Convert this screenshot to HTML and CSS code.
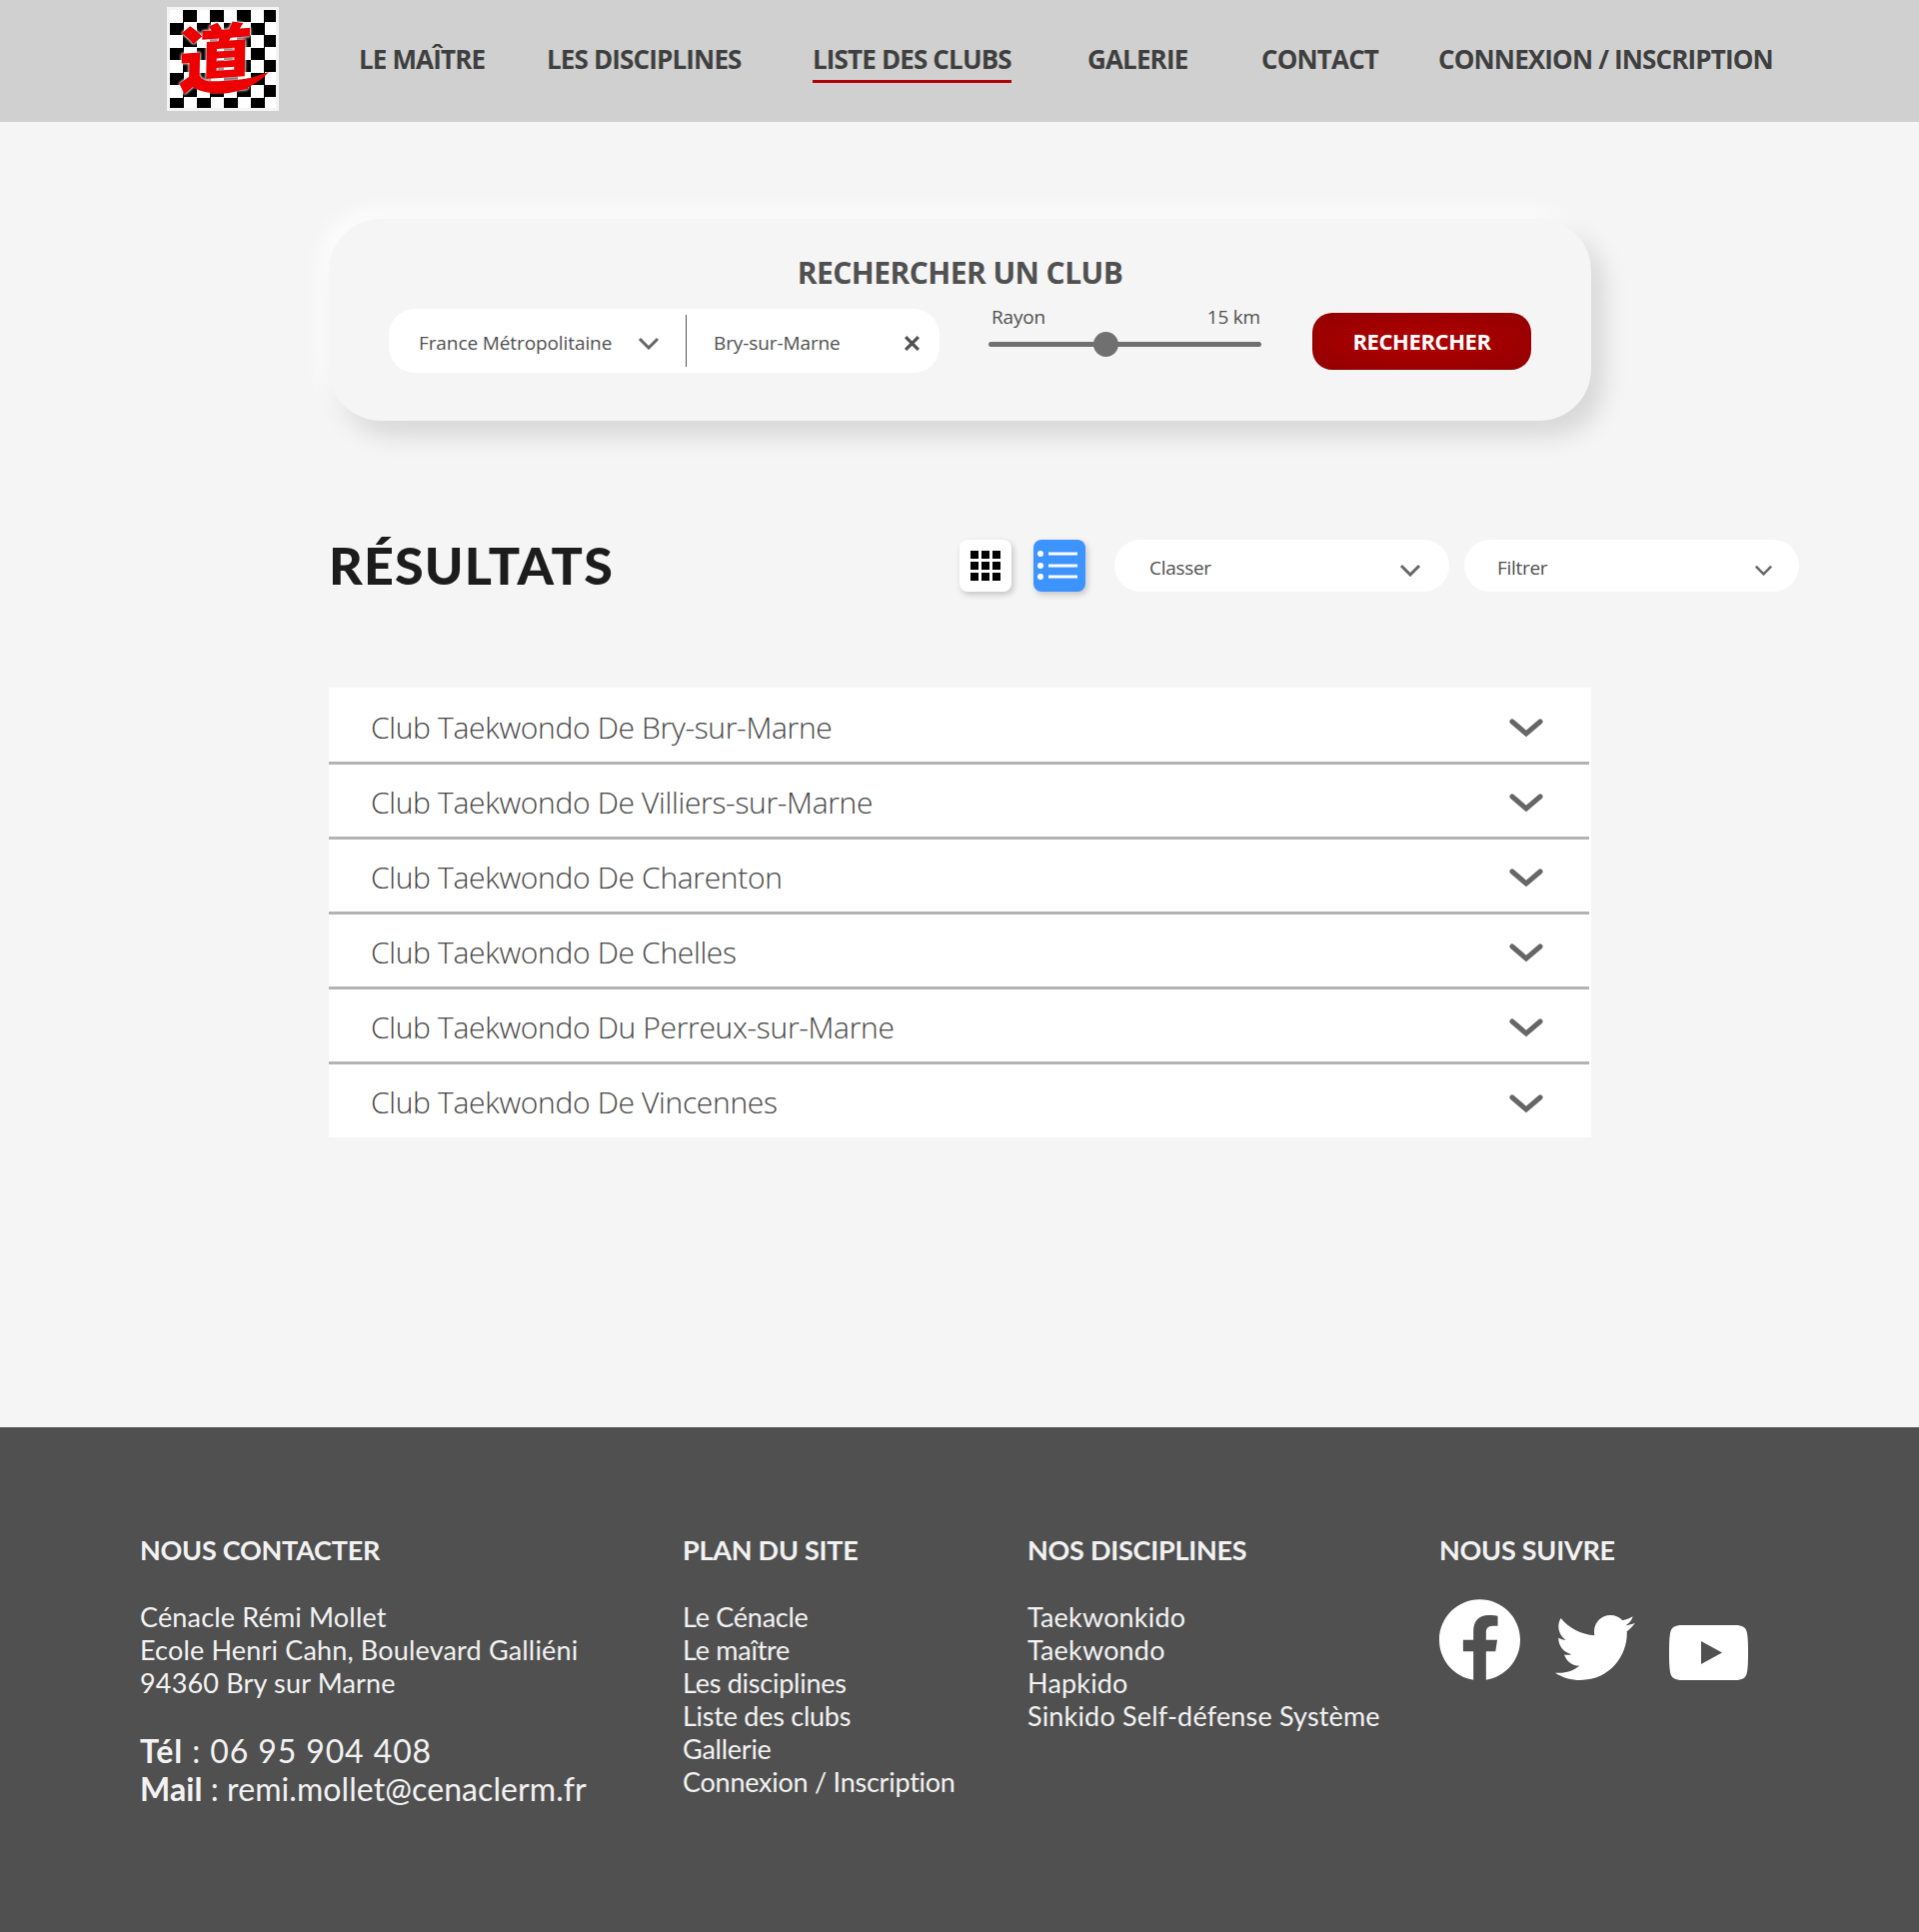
FILE: index.html
```html
<!DOCTYPE html>
<html lang="fr">
<head>
    <meta charset="UTF-8">
    <meta name="viewport" content="width=device-width, initial-scale=1.0">
    <title>Liste des clubs</title>
    <link rel="stylesheet" href="styles.css">
</head>
<body>
    <header class="top">
        <a class="logo" href="#">
            <span class="logo-sign">道</span>
            <svg class="logo-swoosh" viewBox="0 0 84 24"><path d="M0 10c14 8 30 8 46 4 14-4 26-8 38-12-10 11-24 19-40 21C28 25 8 22 0 10z"/></svg>
        </a>
        <nav class="menu">
            <a href="#">LE MAÎTRE</a>
            <a href="#">LES DISCIPLINES</a>
            <a href="#" class="active"><span>LISTE DES CLUBS</span></a>
            <a href="#">GALERIE</a>
            <a href="#">CONTACT</a>
            <a href="#">CONNEXION / INSCRIPTION</a>
        </nav>
    </header>

    <main class="content">
        <section class="search">
            <h2>RECHERCHER UN CLUB</h2>
            <div class="search-row">
                <div class="search-bar">
                    <div class="bar-zone">
                        <span>France Métropolitaine</span>
                        <svg class="chev-small" viewBox="0 0 22 13"><path d="M2 2l9 9 9-9"/></svg>
                    </div>
                    <div class="bar-place">
                        <span>Bry-sur-Marne</span>
                        <svg class="cross" viewBox="0 0 16 16"><path d="M2 2l12 12M14 2L2 14"/></svg>
                    </div>
                </div>
                <div class="radius">
                    <div class="radius-labels"><span>Rayon</span><span>15 km</span></div>
                    <div class="track"><i class="thumb"></i></div>
                </div>
                <button class="btn-search">RECHERCHER</button>
            </div>
        </section>

        <section class="results-head">
            <h1>RÉSULTATS</h1>
            <div class="tools">
                <button class="view-btn">
                    <svg viewBox="0 0 30 30">
                        <path d="M0 0h8v8H0zM11 0h8v8h-8zM22 0h8v8h-8zM0 11h8v8H0zM11 11h8v8h-8zM22 11h8v8h-8zM0 22h8v8H0zM11 22h8v8h-8zM22 22h8v8h-8z"/>
                    </svg>
                </button>
                <button class="view-btn on">
                    <svg viewBox="0 0 44 30">
                        <circle cx="3" cy="3" r="3"/><circle cx="3" cy="15" r="3"/><circle cx="3" cy="26" r="3"/>
                        <path d="M11 1.500h29v3H11zM11 13.500h29v3H11zM11 24.500h29v3H11z"/>
                    </svg>
                </button>
                <div class="pick pick-sort"><span>Classer</span><svg class="chev-small" viewBox="0 0 22 13"><path d="M2 2l9 9 9-9"/></svg></div>
                <div class="pick pick-filter"><span>Filtrer</span><svg class="chev-small" viewBox="0 0 22 13"><path d="M2 2l9 9 9-9"/></svg></div>
            </div>
        </section>

        <ul class="clubs">
            <li><span>Club Taekwondo De Bry-sur-Marne</span><svg class="chev" viewBox="0 0 34 19"><path d="M3 3l14 12L31 3"/></svg></li>
            <li><span>Club Taekwondo De Villiers-sur-Marne</span><svg class="chev" viewBox="0 0 34 19"><path d="M3 3l14 12L31 3"/></svg></li>
            <li><span>Club Taekwondo De Charenton</span><svg class="chev" viewBox="0 0 34 19"><path d="M3 3l14 12L31 3"/></svg></li>
            <li><span>Club Taekwondo De Chelles</span><svg class="chev" viewBox="0 0 34 19"><path d="M3 3l14 12L31 3"/></svg></li>
            <li><span>Club Taekwondo Du Perreux-sur-Marne</span><svg class="chev" viewBox="0 0 34 19"><path d="M3 3l14 12L31 3"/></svg></li>
            <li><span>Club Taekwondo De Vincennes</span><svg class="chev" viewBox="0 0 34 19"><path d="M3 3l14 12L31 3"/></svg></li>
        </ul>
    </main>

    <footer class="foot">
        <div class="foot-col">
            <h3>NOUS CONTACTER</h3>
            <p>Cénacle Rémi Mollet<br>Ecole Henri Cahn, Boulevard Galliéni<br>94360 Bry sur Marne</p>
            <p class="foot-big"><span class="foot-tel"><b>Tél</b> : 06 95 904 408</span><br><b>Mail</b> : remi.mollet@cenaclerm.fr</p>
        </div>
        <div class="foot-col foot-plan">
            <h3>PLAN DU SITE</h3>
            <p>Le Cénacle<br>Le maître<br>Les disciplines<br>Liste des clubs<br>Gallerie<br>Connexion / Inscription</p>
        </div>
        <div class="foot-col">
            <h3>NOS DISCIPLINES</h3>
            <p>Taekwonkido<br>Taekwondo<br>Hapkido<br>Sinkido Self-défense Système</p>
        </div>
        <div class="foot-col">
            <h3>NOUS SUIVRE</h3>
            <div class="social">
                <svg class="fb" viewBox="8 8 496 494"><path d="M504 256C504 119 393 8 256 8S8 119 8 256c0 123.78 90.69 226.38 209.25 245V327.69h-63V256h63v-54.64c0-62.15 37-96.48 93.67-96.48 27.14 0 55.52 4.84 55.52 4.84v61h-31.28c-30.8 0-40.41 19.12-40.41 38.73V256h68.78l-11 71.69h-57.78V501C413.31 482.38 504 379.78 504 256z"/></svg>
                <svg class="tw" viewBox="0 48 512 416"><path d="M459.37 151.716c.325 4.548.325 9.097.325 13.645 0 138.72-105.583 298.558-298.558 298.558-59.452 0-114.68-17.219-161.137-47.106 8.447.974 16.568 1.299 25.34 1.299 49.055 0 94.213-16.568 130.274-44.832-46.132-.975-84.792-31.188-98.112-72.772 6.498.974 12.995 1.624 19.818 1.624 9.421 0 18.843-1.3 27.614-3.573-48.081-9.747-84.143-51.98-84.143-102.985v-1.299c13.969 7.797 30.214 12.67 47.431 13.319-28.264-18.843-46.781-51.005-46.781-87.391 0-19.492 5.197-37.36 14.294-52.954 51.655 63.675 129.3 105.258 216.365 109.807-1.624-7.797-2.599-15.918-2.599-24.04 0-57.828 46.782-104.934 104.934-104.934 30.213 0 57.502 12.67 76.67 33.137 23.715-4.548 46.456-13.32 66.599-25.34-7.798 24.366-24.366 44.833-46.132 57.827 21.117-2.273 41.584-8.122 60.426-16.243-14.292 20.791-32.161 39.308-52.628 54.253z"/></svg>
                <svg class="yt" viewBox="0 0 79 55"><path fill-rule="evenodd" d="M13 0C6 0 2 2 1 8 0 14 0 20 0 27.500S0 41 1 47c1 6 5 8 12 8h53c7 0 11-2 12-8 1-6 1-12 1-19.500S79 14 78 8c-1-6-5-8-12-8zM32 16l21 11.500L32 39z"/></svg>
            </div>
        </div>
    </footer>
</body>
</html>
```
FILE: styles.css
```css
*{
    box-sizing: border-box;
}
body{
    margin: 0;
    background-color: #f5f5f5;
    color: #505050;
    font-family: "Open Sans", "Noto Sans", sans-serif;
}
a{
    color: inherit;
    text-decoration: none;
}
button{
    font-family: inherit;
    border: none;
    cursor: pointer;
}

/* header */
.top{
    height: 122px;
    background-color: #d0d0d0;
    display: flex;
    align-items: center;
    padding-left: 167px;
}
.logo{
    position: relative;
    width: 112px;
    height: 104px;
    margin-bottom: 4px;
    border: 3px solid #f4f4f4;
    background-color: #fff;
    display: flex;
    align-items: center;
    justify-content: center;
}
.logo::before{ /*damier un peu flou comme l'image d'origine*/
    content: "";
    position: absolute;
    inset: 0;
    background-image: conic-gradient(#000 25%, #fff 0 50%, #000 0 75%, #fff 0);
    background-size: 27px 25px;
    filter: blur(.7px);
}
.logo-sign{
    position: relative;
    margin: 0 14px 10px 0;
    color: #ee0000;
    font-family: "Noto Sans CJK JP", "Noto Sans CJK SC", sans-serif;
    font-weight: 900;
    font-size: 74px;
    line-height: 1;
    text-shadow: 0 0 3px #fff, 0 0 3px #fff;
    transform: skewX(-5deg) rotate(-4deg);
}
.logo-swoosh{
    position: absolute;
    left: 15px;
    bottom: 14px;
    width: 84px;
    height: 24px;
    fill: #ee0000;
}
.menu{
    margin-left: 80px;
    display: grid;
    grid-template-columns: 188px 266px 275px 174px 177px auto;
    color: #3f3f3f;
    font-size: 26px;
    font-weight: 700;
    letter-spacing: -0.85px;
}
.menu a{
    padding-top: 2px;
    line-height: 34px;
}
.menu .active span{
    display: inline-block;
    padding-bottom: 4px;
    border-bottom: 3px solid #b30000;
}

/* recherche */
.content{
    padding: 97px 0 0 329px;
    height: 1306px;
}
.search{
    width: 1263px;
    height: 202px;
    border-radius: 52px;
    background-color: #f5f5f5;
    box-shadow: 12px 14px 26px rgba(0,0,0,.13), -8px -8px 22px rgba(255,255,255,.9);
    padding-top: 36px;
}
.search h2{
    margin: 0;
    text-align: center;
    font-size: 30px;
    font-weight: 700;
    line-height: 36px;
    letter-spacing: -0.55px;
}
.search-row{
    display: flex;
    align-items: flex-start;
    margin-top: 18px;
    padding-left: 60px;
}
.search-bar{
    width: 551px;
    height: 64px;
    border-radius: 26px;
    background-color: #fff;
    display: flex;
    align-items: center;
    font-size: 19px;
    letter-spacing: -0.1px;
}
.bar-zone{
    width: 298px;
    height: 52px;
    padding: 0 26px 0 30px;
    border-right: 1px solid #555;
    display: flex;
    align-items: center;
    justify-content: space-between;
}
.bar-zone span,
.bar-place span{
    padding-top: 4px;
}
.bar-place{
    flex: 1;
    padding: 0 19px 0 27px;
    display: flex;
    align-items: center;
    justify-content: space-between;
}
.chev-small{
    width: 22px;
    height: 13px;
    margin-top: 4px;
    fill: none;
    stroke: #666;
    stroke-width: 3;
}
.cross{
    width: 17px;
    height: 17px;
    margin-top: 4px;
    fill: none;
    stroke: #505050;
    stroke-width: 3;
}
.radius{
    width: 273px;
    margin-left: 49px;
    font-size: 19px;
    letter-spacing: -0.2px;
}
.radius-labels{
    display: flex;
    justify-content: space-between;
    padding: 0 1px 0 3px;
    margin-top: -5px;
    line-height: 26px;
}
.track{
    position: relative;
    height: 5px;
    margin-top: 12px;
    border-radius: 3px;
    background-color: #707070;
}
.thumb{
    position: absolute;
    left: 105px;
    top: -10px;
    width: 25px;
    height: 25px;
    border-radius: 50%;
    background-color: #707070;
}
.btn-search{
    width: 219px;
    height: 57px;
    margin: 4px 0 0 51px;
    padding-bottom: 3px;
    border-radius: 20px;
    background: radial-gradient(ellipse at center, #b00000, #930000);
    color: #fff;
    font-size: 22px;
    font-weight: 700;
    letter-spacing: -0.4px;
}

/* resultats */
.results-head{
    width: 1471px;
    margin-top: 119px;
    display: flex;
    justify-content: space-between;
    align-items: center;
}
.results-head h1{
    margin: 0 0 2px;
    color: #1c1c1c;
    font-family: "Lato", sans-serif;
    font-size: 52px;
    font-weight: 900;
    letter-spacing: 1.2px;
    line-height: 50px;
}
.tools{
    display: flex;
    align-items: center;
}
.view-btn{
    width: 52px;
    height: 52px;
    padding: 0;
    margin-right: 22px;
    border-radius: 8px;
    background-color: #fff;
    box-shadow: 2px 3px 6px rgba(0,0,0,.2);
    display: flex;
    align-items: center;
    justify-content: center;
}
.view-btn svg{
    width: 30px;
    height: 30px;
}
.view-btn.on{
    margin-right: 29px;
    background-color: #3d93ff;
}
.view-btn.on svg{
    width: 44px;
    fill: #fff;
}
.pick{
    width: 335px;
    height: 52px;
    padding: 4px 28px 0 35px;
    border-radius: 26px;
    background-color: #fff;
    display: flex;
    align-items: center;
    justify-content: space-between;
    font-size: 19px;
    letter-spacing: -0.3px;
}
.pick-filter{
    margin-left: 15px;
    padding-left: 33px;
    padding-right: 26px;
}
.pick-filter .chev-small{
    width: 19px;
    height: 11px;
}

/* liste */
.clubs{
    width: 1263px;
    margin: 96px 0 0;
    padding: 0;
    list-style: none;
    background-color: #fff;
}
.clubs li{
    height: 75px;
    padding: 5px 48px 0 42px;
    display: flex;
    align-items: center;
    justify-content: space-between;
    font-size: 30px;
    font-weight: 300;
    color: #444;
    letter-spacing: -0.33px;
    background: linear-gradient(#b3b3b3, #b3b3b3) no-repeat 0 0 / calc(100% - 2px) 3px;
}
.clubs li:first-child{
    height: 74px;
    padding-top: 4px;
    background: none;
}
.clubs li:last-child{
    height: 76px;
}
.chev{
    width: 34px;
    height: 19px;
    margin-top: 3px;
    fill: none;
    stroke: #666;
    stroke-width: 5;
    stroke-linecap: round;
}

/* footer */
.foot{
    height: 505px;
    background-color: #505050;
    color: #f2f2f2;
    padding: 105px 0 0 140px;
    display: grid;
    grid-template-columns: 543px 345px 412px 1fr;
    font-family: "Lato", sans-serif;
    font-size: 27px;
    line-height: 33px;
}
.foot h3{
    margin: 0 0 32px;
    font-size: 27px;
    font-weight: 700;
    line-height: 36px;
    letter-spacing: -0.25px;
}
.foot p{
    margin: 0;
    letter-spacing: .17px;
}
.foot .foot-plan p{
    letter-spacing: -0.25px;
}
.foot .foot-big{
    margin-top: 33px;
    font-size: 32px;
    line-height: 38px;
    letter-spacing: .08px;
}
.foot-tel{
    letter-spacing: .9px;
}
.social{
    display: flex;
    align-items: flex-end;
    margin-top: -1px;
    fill: #fff;
}
.fb{
    width: 81px;
    height: 81px;
}
.tw{
    width: 80px;
    height: 65px;
    margin-left: 35px;
}
.yt{
    width: 79px;
    height: 55px;
    margin-left: 34px;
}
```
